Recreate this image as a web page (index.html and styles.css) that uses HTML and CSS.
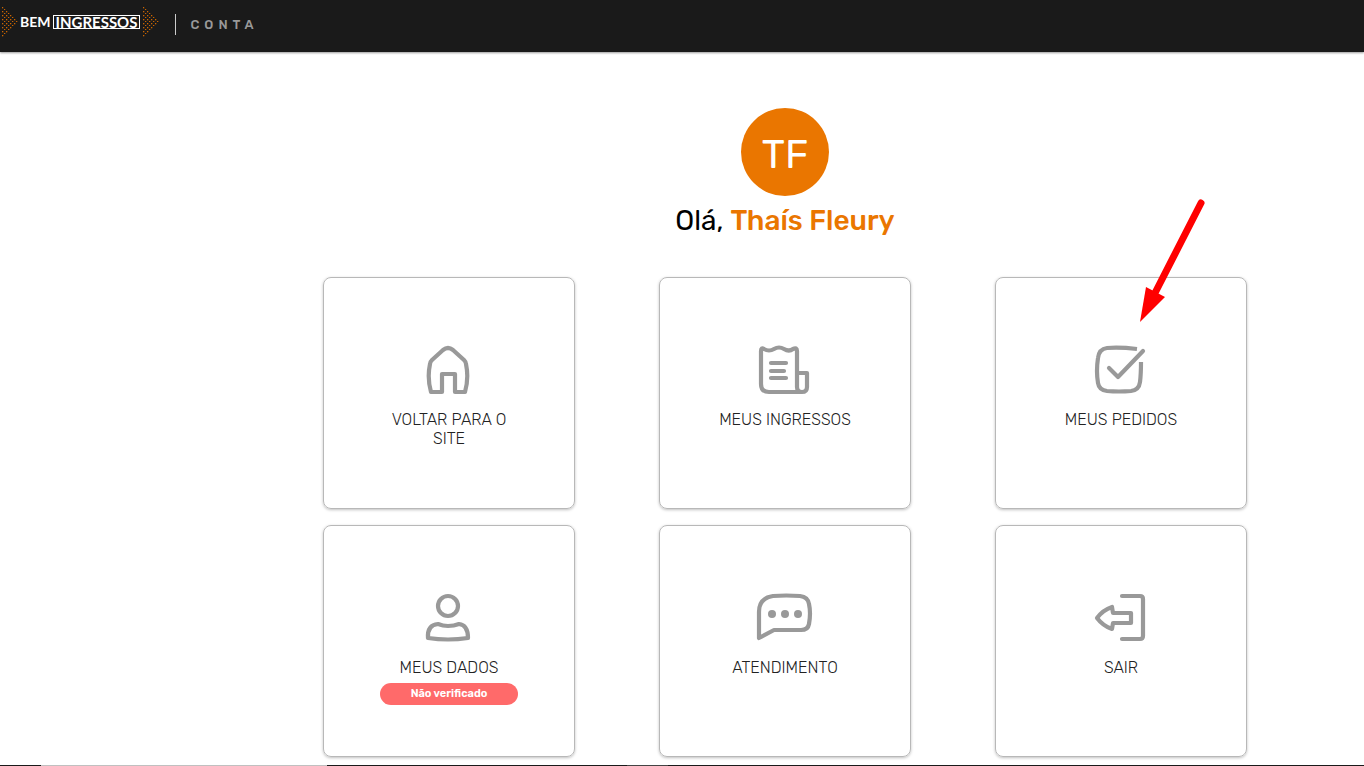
FILE: index.html
```html
<!DOCTYPE html>
<html lang="pt-BR">
<head>
<meta charset="utf-8">
<meta name="viewport" content="width=device-width, initial-scale=1">
<title>Bem Ingressos | Conta</title>
<link rel="stylesheet" href="styles.css">
</head>
<body>
<header class="topbar">
  <a class="logo" href="#" aria-label="Bem Ingressos">
    <svg class="logo-dots" width="17" height="32" viewBox="0 0 17 32" aria-hidden="true">
      <defs>
        <pattern id="dots" width="4" height="4" patternUnits="userSpaceOnUse">
          <rect class="dot" width="1.3" height="1.3" x="0" y="1"/><rect class="dot" width="1.3" height="1.3" x="2" y="3"/>
        </pattern>
      </defs>
      <path fill="url(#dots)" d="M0 0 17 16 0 32Z"/>
    </svg>
    <span class="logo-bem">BEM</span><span class="logo-box">INGRESSOS</span>
    <svg class="logo-dots" width="17" height="32" viewBox="0 0 17 32" aria-hidden="true"><path fill="url(#dots)" d="M0 0 17 16 0 32Z"/></svg>
  </a>
  <span class="section">CONTA</span>
</header>

<main class="account">
  <div class="avatar">TF</div>
  <h1 class="greeting">Olá, <strong>Thaís Fleury</strong></h1>
  <nav class="cards" aria-label="Conta">
    <a class="card" href="#">
      <svg class="icon" viewBox="0 0 60 52" aria-hidden="true"><path d="M12 48Q8 34 11 20Q11 18 13 16L24 6Q29 2 34 6L45 16Q47 18 47 20Q50 34 46 48H36V30H23V48Z"/></svg>
      <span class="label">VOLTAR PARA O SITE</span>
    </a>
    <a class="card" href="#">
      <svg class="icon" viewBox="0 0 60 52" aria-hidden="true"><path d="M42 43V7Q42 3 38 5Q34 8 29 5Q24 2 19 5Q14 8 9 5Q6 3 6 7V40Q6 48 14 48H47Q52 48 52 43V29H42M42 43Q42 48 47 48M16 19H31M16 27H29M16 34H31"/></svg>
      <span class="label">MEUS INGRESSOS</span>
    </a>
    <a class="card" href="#">
      <svg class="icon" viewBox="0 0 60 52" aria-hidden="true"><path class="butt" d="M46 5Q29 3 16 4Q8 5 7 14Q5 27 7 39Q8 46 16 47Q28 48 40 47Q48 46 49 38Q50 30 50 18"/><path d="M18 24 27 33 52 7"/></svg>
      <span class="label">MEUS PEDIDOS</span>
      <svg class="pointer" width="76" height="132" viewBox="0 0 76 132" aria-hidden="true"><path class="shaft" d="M66 9 20 99"/><path class="head" d="M5 128 11 93 30 103Z"/></svg>
    </a>
    <a class="card" href="#">
      <svg class="icon" viewBox="0 0 60 52" aria-hidden="true"><circle cx="29" cy="14" r="10"/><path d="M9 46Q8 33 19 32Q24 34 29 34Q35 34 40 32Q49 33 49 46Q29 49 9 46Z"/></svg>
      <span class="label">MEUS DADOS</span>
      <span class="badge">Não verificado</span>
    </a>
    <a class="card" href="#">
      <svg class="icon" viewBox="0 0 60 52" aria-hidden="true"><path d="M4 46V20Q4 6 18 4Q31 3 45 4Q53 5 54 12Q56 21 54 32Q53 38 46 38H19Z"/><g class="solid"><circle cx="17" cy="22" r="4"/><circle cx="30" cy="22" r="4"/><circle cx="43" cy="22" r="4"/></g></svg>
      <span class="label">ATENDIMENTO</span>
    </a>
    <a class="card" href="#">
      <svg class="icon" viewBox="0 0 60 52" aria-hidden="true"><path d="M31 4H49Q52 4 52 7V44Q52 47 49 47H31M6 26Q12 18 21 15L22 21H40V31H22L21 37Q12 34 6 26Z"/></svg>
      <span class="label">SAIR</span>
    </a>
  </nav>
</main>
<footer class="edge"><span class="edge-light"></span><span class="edge-mid"></span></footer>
</body>
</html>
```
FILE: styles.css
```css
* { box-sizing: border-box; }

body {
  margin: 0;
  min-height: 100vh;
  display: flex;
  flex-direction: column;
  background: #fff;
  color: #000;
  font-family: Rubik, Roboto, "Liberation Sans", sans-serif;
}

a { color: inherit; text-decoration: none; }

.topbar {
  display: flex;
  align-items: center;
  gap: 15px;
  height: 52px;
  padding: 0 2px 4px;
  background: #1a1a1a;
  box-shadow: 0 1px 2px rgba(0, 0, 0, 0.4);
}

.logo {
  display: flex;
  align-items: center;
  height: 32px;
  margin-bottom: 4px;
  color: #fff;
  font: 700 14px/12px Lato, sans-serif;
}
.dot { fill: #c96400; }
.logo-bem { margin: 0 2px 0 1px; }
.logo-box {
  margin-right: 3px;
  padding: 0 2px;
  border: 1px solid #fff;
  font-size: 15px;
}

.section {
  padding-left: 14px;
  border-left: 1px solid #ccc;
  color: #999;
  font-size: 13px;
  font-weight: 500;
  line-height: 21px;
  letter-spacing: 5px;
}

.account {
  flex: 1;
  display: flex;
  flex-direction: column;
  align-items: center;
  padding: 56px 0 8px 206px;
}

.avatar {
  display: grid;
  place-items: center;
  width: 88px;
  height: 88px;
  padding-top: 6px;
  border-radius: 50%;
  background: #ea7600;
  color: #fff;
  font-size: 40px;
  line-height: 48px;
}

.greeting {
  margin: 8px 0 40px;
  font-size: 28px;
  font-weight: 400;
  line-height: 33px;
}
.greeting strong { color: #ea7600; font-weight: 500; }

.cards {
  display: grid;
  grid-template-columns: repeat(3, 1fr);
  gap: 16px 84px;
  width: 100%;
  max-width: 924px;
}

.card {
  position: relative;
  display: flex;
  flex-direction: column;
  align-items: center;
  min-height: 232px;
  padding: 66px 56px 0;
  border: 1px solid #b8b8b8;
  border-radius: 8px;
  box-shadow: 0 1px 3px rgba(0, 0, 0, 0.25);
  color: #222;
  text-align: center;
}

.icon {
  width: 60px;
  height: 52px;
  fill: none;
  stroke: #999;
  stroke-width: 4.2;
  stroke-linecap: round;
  stroke-linejoin: round;
}
.icon .butt { stroke-linecap: butt; }
.icon .solid { fill: #999; stroke: none; }

.label {
  margin-top: 14px;
  font-size: 16px;
  font-weight: 300;
  line-height: 19px;
}

.badge {
  width: 100%;
  margin-top: 6px;
  border-radius: 11px;
  background: #ff6a6a;
  color: #fff;
  font-size: 11px;
  font-weight: 600;
  line-height: 22px;
}

.pointer { position: absolute; left: 139px; top: -84px; pointer-events: none; }
.shaft { fill: none; stroke: #f00; stroke-width: 7; stroke-linecap: round; }
.head { fill: #f00; }

.edge {
  display: grid;
  grid-template-columns: 3% 21% 22% 3%;
  height: 1px;
  background: #1a1a1a;
}
.edge-light { grid-column: 2; background: #c0c0c0; }
.edge-mid { grid-column: 4; background: #444; }
```
